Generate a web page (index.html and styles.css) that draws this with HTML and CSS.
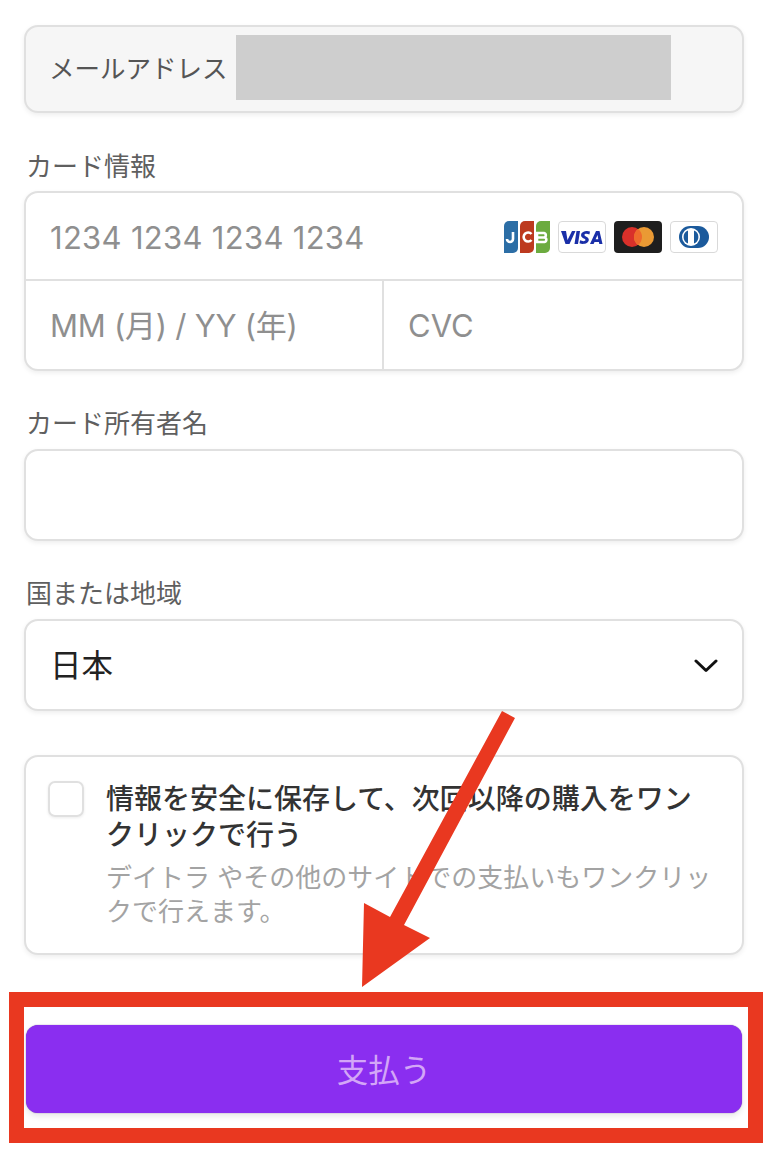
FILE: index.html
```html
<!DOCTYPE html>
<html lang="ja">
<head>
    <meta charset="UTF-8">
    <meta name="viewport" content="width=device-width, initial-scale=1.0">
    <title>支払い</title>
    <link rel="stylesheet" href="styles.css">
</head>
<body>

    <div class="checkout">
        <div class="box email-box">
            <span class="email-label">メールアドレス</span>
            <div class="email-mask"></div>
        </div>

        <div class="field-label card-label">カード情報</div>
        <div class="box card-box">
            <div class="card-number">
                <span class="placeholder number-placeholder">1234 1234 1234 1234</span>
                <div class="brands">
                    <svg class="brand" width="46" height="32" viewBox="0 0 46 32">
                        <path d="M0 5a5 5 0 0 1 5-5h9v27a5 5 0 0 1-5 5H0z" fill="#2c6ea6"/>
                        <path d="M16 5a5 5 0 0 1 5-5h9v27a5 5 0 0 1-5 5h-9z" fill="#bd3a1f"/>
                        <path d="M32 5a5 5 0 0 1 5-5h9v27a5 5 0 0 1-5 5h-9z" fill="#6cab3f"/>
                        <path d="M9 11v7a3 3 0 0 1-6 0" fill="none" stroke="#fff" stroke-width="2.600"/>
                        <path d="M27.500 13a4.500 4.500 0 1 0 0 6" fill="none" stroke="#fff" stroke-width="2.600"/>
                        <path d="M33 12h7a2.300 2.300 0 0 1 0 4.500h-6h6.500a2.300 2.300 0 0 1 0 4.500H33z" fill="none" stroke="#fff" stroke-width="2.600"/>
                    </svg>
                    <svg class="brand" width="48" height="32" viewBox="0 0 48 32">
                        <rect x="0.500" y="0.500" width="47" height="31" rx="3.500" fill="#fff" stroke="#d9d9d9"/>
                        <g class="visa-mark" transform="translate(0 -1)">
                            <path d="M3 11h5l1.500 9L14 11h3.500l-6 13H7.500z"/>
                            <path d="M18.500 11h3.500l-2 13h-3.500z"/>
                            <path d="M32 11.500l-.6 3c-2-1-5-1-5 .5 0 1.500 5 1.800 4.400 5.300-.5 3.500-6 4.500-9.300 3l.6-3c2 1 5.200 1.300 5.400-.3.200-1.600-5-1.700-4.400-5.300.5-3.500 5.900-4.500 8.900-3.200z"/>
                            <path d="M38 11h3.500L44.500 24h-3.200l-.4-2h-4.400l-.9 2h-3.600zM37.600 19.300h2.700l-.8-4.300z"/>
                        </g>
                    </svg>
                    <svg class="brand" width="48" height="32" viewBox="0 0 48 32">
                        <rect width="48" height="32" rx="4" fill="#1e1e1e"/>
                        <circle cx="18" cy="16" r="10" fill="#d9302a"/>
                        <circle cx="30" cy="16" r="10" fill="#ea9a34"/>
                        <path d="M24 8a10 10 0 0 1 0 16a10 10 0 0 1 0-16z" fill="#ee6a2c"/>
                    </svg>
                    <svg class="brand" width="48" height="32" viewBox="0 0 48 32">
                        <rect x="0.500" y="0.500" width="47" height="31" rx="3.500" fill="#fff" stroke="#d9d9d9"/>
                        <rect x="9" y="5" width="30" height="22" rx="11" fill="#1b5a9c"/>
                        <circle cx="21" cy="16" r="9" fill="#fff"/>
                        <path d="M18 9.500v13a7 7 0 0 1 0-13zM24 9.500a7 7 0 0 1 0 13z" fill="#1b5a9c"/>
                    </svg>
                </div>
            </div>
            <div class="card-row">
                <div class="card-expiry"><span class="placeholder">MM (月) / YY (年)</span></div>
                <div class="card-cvc"><span class="placeholder">CVC</span></div>
            </div>
        </div>

        <div class="field-label name-label">カード所有者名</div>
        <div class="box input-box"></div>

        <div class="field-label country-label">国または地域</div>
        <div class="box input-box select-box">
            <span class="select-value">日本</span>
            <svg class="chevron" width="24" height="14" viewBox="0 0 24 14">
                <path d="M2 2l10 9.500L22 2" fill="none" stroke="#111" stroke-width="3" stroke-linecap="round" stroke-linejoin="round"/>
            </svg>
        </div>

        <div class="box save-box">
            <div class="checkbox"></div>
            <div class="save-text">
                <div class="save-title">情報を安全に保存して、次回以降の購入をワンクリックで行う</div>
                <div class="save-note">デイトラ やその他のサイトでの支払いもワンクリックで行えます。</div>
            </div>
        </div>

        <button class="pay-button">支払う</button>
    </div>

    <!-- Red annotations drawn on top of the screenshot -->
    <svg class="annotation-arrow" width="768" height="1154" viewBox="0 0 768 1154">
        <polygon points="502,711 515,718 404,925 430,938 362,987 364,903 390,917" fill="#e93820"/>
    </svg>
    <div class="annotation-frame"></div>

</body>
</html>
```

FILE: styles.css
```css
* {
    box-sizing: border-box;
}

html, body {
    margin: 0;
    padding: 0;
    background-color: #ffffff;
}

body {
    position: relative;
    width: 768px;
    height: 1154px;
    overflow: hidden;
    font-family: "Inter", "Noto Sans CJK JP", sans-serif;
    color: #333333;
}

.checkout {
    padding: 25px 24px 0 24px;
}

.box {
    width: 720px;
    background-color: #ffffff;
    border: 2px solid #e0e0e0;
    border-radius: 14px;
    box-shadow: 0 2px 5px rgba(0, 0, 0, 0.07);
}

.email-box {
    position: relative;
    display: flex;
    align-items: center;
    height: 88px;
    padding-left: 23px;
    padding-bottom: 6px;
    background-color: #f6f6f6;
}

.email-label {
    font-size: 25.500px;
    color: #555555;
}

.email-mask {
    position: absolute;
    left: 210px;
    top: 8px;
    width: 435px;
    height: 65px;
    background-color: #cecece;
}

.field-label {
    padding-left: 2px;
    font-size: 26px;
    line-height: 36px;
    color: #5f5f5f;
}

.card-label {
    margin-top: 36px;
    margin-bottom: 6px;
}

.name-label {
    margin-top: 35px;
    margin-bottom: 7px;
}

.country-label {
    margin-top: 35px;
    margin-bottom: 7px;
}

.card-box {
    height: 180px;
}

.card-number {
    display: flex;
    align-items: center;
    justify-content: space-between;
    height: 88px;
    padding: 2px 24px 0 24px;
    border-bottom: 2px solid #e0e0e0;
}

.placeholder {
    font-size: 31px;
    color: #8f8f8f;
}

.number-placeholder {
    letter-spacing: 0.3px;
}

.brands {
    display: flex;
    gap: 8px;
}

.brand {
    display: block;
}

.visa-mark {
    fill: #1a2fa8;
}

.card-row {
    display: flex;
    height: 88px;
}

.card-expiry {
    display: flex;
    align-items: center;
    width: 358px;
    padding-left: 24px;
    padding-bottom: 4px;
    border-right: 2px solid #e0e0e0;
    letter-spacing: -0.25px;
}

.card-cvc {
    display: flex;
    align-items: center;
    padding-left: 24px;
}

.input-box {
    height: 92px;
}

.select-box {
    display: flex;
    align-items: center;
    justify-content: space-between;
    padding: 0 24px 4px 24px;
}

.select-value {
    font-size: 31.500px;
    color: #222222;
}

.chevron {
    margin-top: 6px;
}

.save-box {
    display: flex;
    height: 200px;
    margin-top: 44px;
    padding: 24px 25px 0 22px;
}

.checkbox {
    flex-shrink: 0;
    width: 36px;
    height: 36px;
    margin-right: 23px;
    border: 2px solid #e0e0e0;
    border-radius: 7px;
    box-shadow: 0 1px 3px rgba(0, 0, 0, 0.08);
}

.save-text {
    margin-left: -1px;
}

.save-title {
    font-size: 28px;
    line-height: 36px;
    font-weight: 500;
    color: #333333;
}

.save-note {
    margin-top: 8px;
    font-size: 26px;
    line-height: 34px;
    color: #a3a3a3;
}

.pay-button {
    display: block;
    width: 716px;
    height: 88px;
    margin-top: 70px;
    margin-left: 2px;
    padding-bottom: 4px;
    border: none;
    border-radius: 12px;
    background-color: #8a2ef0;
    box-shadow: 0 0 1px rgba(80, 40, 140, 0.9), 0 3px 6px rgba(0, 0, 0, 0.1);
    font-family: inherit;
    font-size: 31.500px;
    color: #d3a6f7;
}

.annotation-arrow {
    position: absolute;
    left: 0;
    top: 0;
    pointer-events: none;
}

.annotation-frame {
    position: absolute;
    left: 9px;
    top: 992px;
    width: 754px;
    height: 151px;
    border: 15px solid #e93820;
}
```
